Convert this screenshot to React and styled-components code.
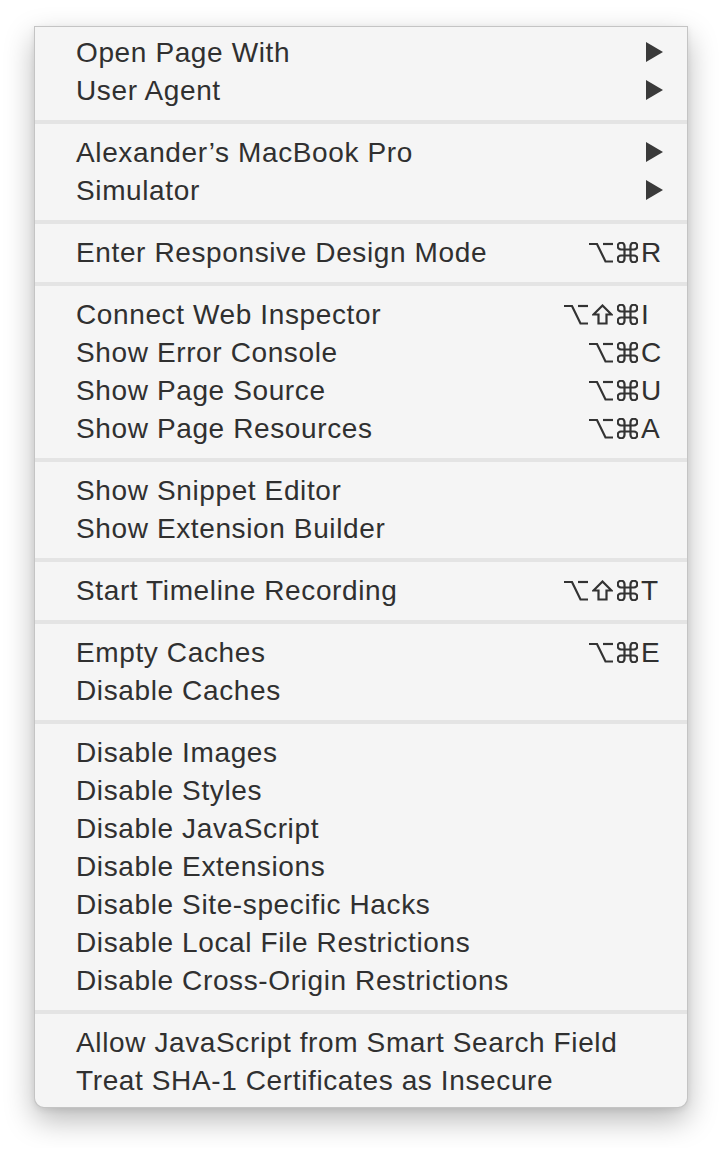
import React from "react";
import styled, { createGlobalStyle } from "styled-components";

const Global = createGlobalStyle`
  html, body { margin: 0; padding: 0; background: #ffffff; }
  body { font-family: "Liberation Sans", Arial, sans-serif; }
`;

const Page = styled.div`
  padding: 26px 0 40px 34px;
`;

const Menu = styled.div`
  width: 652px;
  background: #f5f5f5;
  border: 1px solid rgba(0, 0, 0, 0.2);
  border-radius: 0 0 10px 10px;
  box-shadow: 0 12px 30px rgba(0, 0, 0, 0.28), 0 2px 6px rgba(0, 0, 0, 0.08);
  padding: 6px 0 8px;
  display: flex;
  flex-direction: column;
`;

const Row = styled.div`
  display: flex;
  align-items: center;
  height: 38px;
  padding: 0 24px 0 41px;
  font-size: 28px;
  line-height: 38px;
  letter-spacing: 0.62px;
  color: #303030;
  white-space: nowrap;
`;

const Label = styled.span`
  flex: 1;
  padding-top: 1px;
`;

const Separator = styled.div`
  height: 4px;
  margin: 11px 0 9px;
  background: #e4e4e4;
`;

const Shortcut = styled.span`
  display: flex;
  align-items: center;
`;

const Mods = styled.span`
  display: flex;
  align-items: center;
  gap: 4px;
  margin-right: 3px;
`;

const Key = styled.span`
  width: 22px;
  text-align: left;
  letter-spacing: 0;
  padding-top: 1px;
`;

const Glyph = styled.svg`
  display: block;
  fill: none;
  stroke: #333333;
  stroke-width: 2.2;
  stroke-linejoin: miter;
`;

const Arrow = styled.svg`
  display: block;
  fill: #3a3a3a;
`;

const Opt = () => (
  <Glyph width="24" height="21" viewBox="0 0 24 21">
    <path d="M0 2 H8 L16.5 19.5 H24" />
    <path d="M14 2 H24" />
  </Glyph>
);

const Shift = () => (
  <Glyph width="21" height="21" viewBox="0 0 21 21">
    <path d="M10.5 1.5 L19.5 10.5 H14.5 V19.5 H6.5 V10.5 H1.5 Z" />
  </Glyph>
);

const Cmd = () => (
  <Glyph width="21" height="21" viewBox="0 0 21 21">
    <path d="M7.5 7.5 V4 A3.4 3.4 0 1 0 4 7.5 H17 A3.4 3.4 0 1 0 13.5 4 V17 A3.4 3.4 0 1 0 17 13.5 H4 A3.4 3.4 0 1 0 7.5 17 Z" />
  </Glyph>
);

const Submenu = () => (
  <Arrow width="17" height="20" viewBox="0 0 17 20">
    <polygon points="0,0 17,10 0,20" />
  </Arrow>
);

const modMap = { o: Opt, s: Shift, c: Cmd };

const Item = ({ label, sub, mods, k }) => (
  <Row>
    <Label>{label}</Label>
    {sub && <Submenu />}
    {k && (
      <Shortcut>
        <Mods>
          {mods.split("").map((m, i) => {
            const C = modMap[m];
            return <C key={i} />;
          })}
        </Mods>
        <Key>{k}</Key>
      </Shortcut>
    )}
  </Row>
);

const sections = [
  [
    { label: "Open Page With", sub: true },
    { label: "User Agent", sub: true },
  ],
  [
    { label: "Alexander\u2019s MacBook Pro", sub: true },
    { label: "Simulator", sub: true },
  ],
  [{ label: "Enter Responsive Design Mode", mods: "oc", k: "R" }],
  [
    { label: "Connect Web Inspector", mods: "osc", k: "I" },
    { label: "Show Error Console", mods: "oc", k: "C" },
    { label: "Show Page Source", mods: "oc", k: "U" },
    { label: "Show Page Resources", mods: "oc", k: "A" },
  ],
  [
    { label: "Show Snippet Editor" },
    { label: "Show Extension Builder" },
  ],
  [{ label: "Start Timeline Recording", mods: "osc", k: "T" }],
  [
    { label: "Empty Caches", mods: "oc", k: "E" },
    { label: "Disable Caches" },
  ],
  [
    { label: "Disable Images" },
    { label: "Disable Styles" },
    { label: "Disable JavaScript" },
    { label: "Disable Extensions" },
    { label: "Disable Site-specific Hacks" },
    { label: "Disable Local File Restrictions" },
    { label: "Disable Cross-Origin Restrictions" },
  ],
  [
    { label: "Allow JavaScript from Smart Search Field" },
    { label: "Treat SHA-1 Certificates as Insecure" },
  ],
];

export default function App() {
  return (
    <Page>
      <Global />
      <Menu>
        {sections.map((sec, si) => (
          <React.Fragment key={si}>
            {si > 0 && <Separator />}
            {sec.map((it) => (
              <Item key={it.label} {...it} />
            ))}
          </React.Fragment>
        ))}
      </Menu>
    </Page>
  );
}
